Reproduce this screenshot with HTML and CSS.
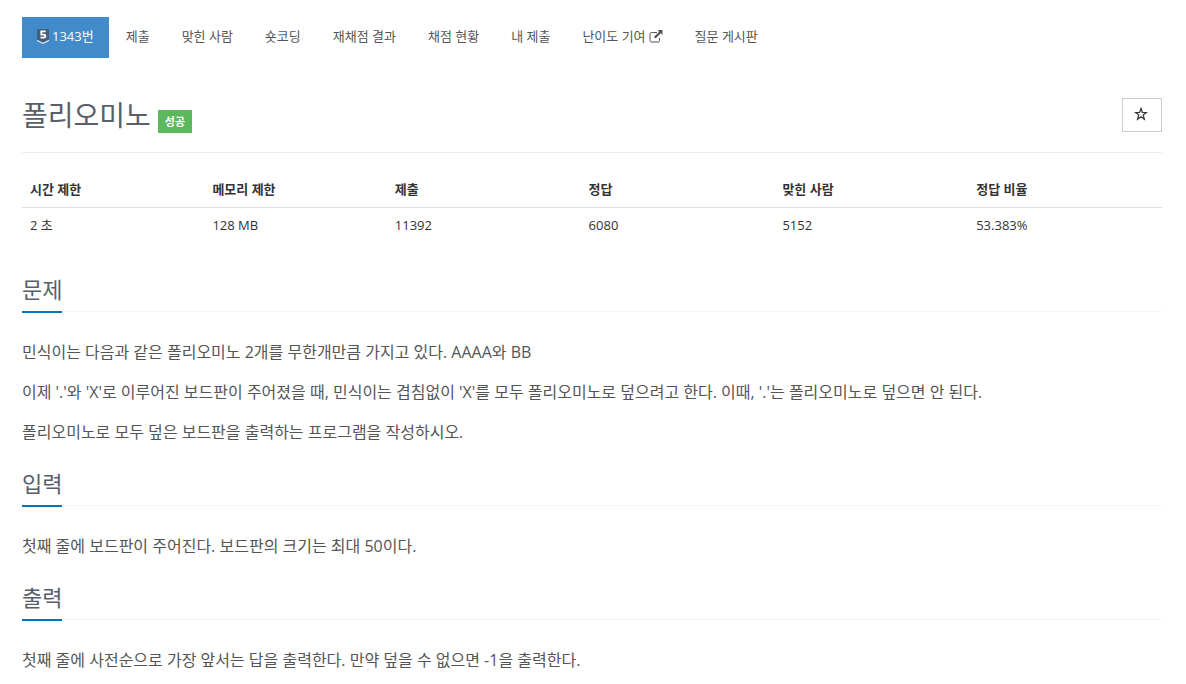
FILE: index.html
```html
<!DOCTYPE html>
<html lang="ko">
<head>
<meta charset="utf-8">
<meta name="viewport" content="width=device-width, initial-scale=1">
<title>1343번: 폴리오미노</title>
<link rel="stylesheet" href="styles.css">
</head>
<body>
<div class="container">
  <nav class="tabs">
    <a class="tab active" href="#"><svg class="tier" viewBox="0 0 12 15" aria-hidden="true"><path d="M0 0h12v11l-6 3.200L0 11z" fill="#435f7a"/><path d="M0 10.800l6 3 6-3v1.200l-6 3-6-3z" fill="#e8eef4"/><path d="M8.800 2.300H4.300v3.300h2.300c1.300 0 1.800.5 1.800 1.500S7.700 8.700 6.400 8.700H3.500" fill="none" stroke="#fff" stroke-width="1.800"/></svg><span>1343번</span></a>
    <a class="tab" href="#">제출</a>
    <a class="tab" href="#">맞힌 사람</a>
    <a class="tab" href="#">숏코딩</a>
    <a class="tab" href="#">재채점 결과</a>
    <a class="tab" href="#">채점 현황</a>
    <a class="tab" href="#">내 제출</a>
    <a class="tab" href="#"><span>난이도 기여</span><svg class="external" viewBox="0 0 14 13" aria-hidden="true"><path d="M8 2.500H2.500A1.500 1.500 0 0 0 1 4v6.500A1.500 1.500 0 0 0 2.500 12h6.500a1.500 1.500 0 0 0 1.500-1.500V8" fill="none" stroke="currentColor"/><path d="M8.500 0H13.500v5l-1.700-1.700-5.300 5.300-1.600-1.600 5.300-5.300z" fill="currentColor"/></svg></a>
    <a class="tab" href="#">질문 게시판</a>
  </nav>

  <header class="title-bar">
    <h1 class="title">폴리오미노</h1>
    <span class="label">성공</span>
    <button class="favorite" type="button" aria-label="즐겨찾기"><svg class="star" viewBox="0 0 14 14" aria-hidden="true"><path d="M7 1.500l1.400 4h4.100L9.200 8l1.200 4.200L7 9.800l-3.400 2.400L4.800 8 1.500 5.500h4.100z" fill="none" stroke="#333" stroke-width="1.200"/></svg></button>
  </header>

  <table class="info">
    <thead>
      <tr><th class="limit">시간 제한</th><th class="limit">메모리 제한</th><th>제출</th><th>정답</th><th>맞힌 사람</th><th>정답 비율</th></tr>
    </thead>
    <tbody>
      <tr><td>2 초</td><td>128 MB</td><td>11392</td><td>6080</td><td>5152</td><td>53.383%</td></tr>
    </tbody>
  </table>

  <section class="section">
    <div class="headline"><h2>문제</h2></div>
    <p>민식이는 다음과 같은 폴리오미노 2개를 무한개만큼 가지고 있다. AAAA와 BB</p>
    <p>이제 '.'와 'X'로 이루어진 보드판이 주어졌을 때, 민식이는 겹침없이 'X'를 모두 폴리오미노로 덮으려고 한다. 이때, '.'는 폴리오미노로 덮으면 안 된다.</p>
    <p>폴리오미노로 모두 덮은 보드판을 출력하는 프로그램을 작성하시오.</p>
  </section>

  <section class="section">
    <div class="headline"><h2>입력</h2></div>
    <p>첫째 줄에 보드판이 주어진다. 보드판의 크기는 최대 50이다.</p>
  </section>

  <section class="section">
    <div class="headline"><h2>출력</h2></div>
    <p>첫째 줄에 사전순으로 가장 앞서는 답을 출력한다. 만약 덮을 수 없으면 -1을 출력한다.</p>
  </section>
</div>
</body>
</html>
```
FILE: styles.css
```css
* { box-sizing: border-box; }

body {
  margin: 0;
  background: #fff;
  color: #333;
  font: 13px/21px "Open Sans", "Noto Sans CJK KR", sans-serif;
}

.container { padding: 17px 24px 0 22px; }

.tabs { display: flex; flex-wrap: wrap; gap: 2px; }

.tab {
  display: flex;
  align-items: center;
  gap: 3px;
  padding: 9px 15px 11px;
  color: #555;
  text-decoration: none;
}

.tab.active { background: #428bca; color: #fff; }

.tier { width: 12px; height: 15px; }
.external { width: 14px; height: 13px; }

.title-bar {
  display: flex;
  align-items: flex-end;
  gap: 7px;
  margin-top: 40px;
  padding-bottom: 19px;
  border-bottom: 1px solid #eee;
}

.title {
  margin: 0;
  color: #585f69;
  font-size: 28px;
  font-weight: 400;
  line-height: 35px;
}

.label {
  padding: 0 7px;
  background: #5cb85c;
  color: #fff;
  font-size: 11px;
  font-weight: 700;
  line-height: 23px;
}

.favorite {
  display: flex;
  align-items: center;
  justify-content: center;
  align-self: flex-start;
  width: 40px;
  height: 34px;
  margin-left: auto;
  padding: 0 2px 2px 0;
  border: 1px solid #ccc;
  background: #fff;
}

.star { width: 14px; height: 14px; }

.info {
  width: 100%;
  margin-top: 19px;
  border-collapse: collapse;
  table-layout: fixed;
}

.info th, .info td {
  width: 17%;
  padding: 7px 8px;
  text-align: left;
}

.info .limit { width: 16%; }
.info th { border-bottom: 1px solid #ddd; font-weight: 700; }

.section { margin-top: 20px; }
.info + .section { margin-top: 30px; }

.headline { margin-bottom: 25px; border-bottom: 1px dotted #e4e9f0; }

.headline h2 {
  display: inline-block;
  margin: 0 0 -2px;
  padding-bottom: 5px;
  border-bottom: 2px solid #0076c0;
  color: #585f69;
  font-size: 22px;
  font-weight: 400;
  line-height: 33px;
  vertical-align: top;
}

.section p {
  margin: 0 0 10px;
  color: #555;
  font-size: 16px;
  line-height: 30px;
}
```
